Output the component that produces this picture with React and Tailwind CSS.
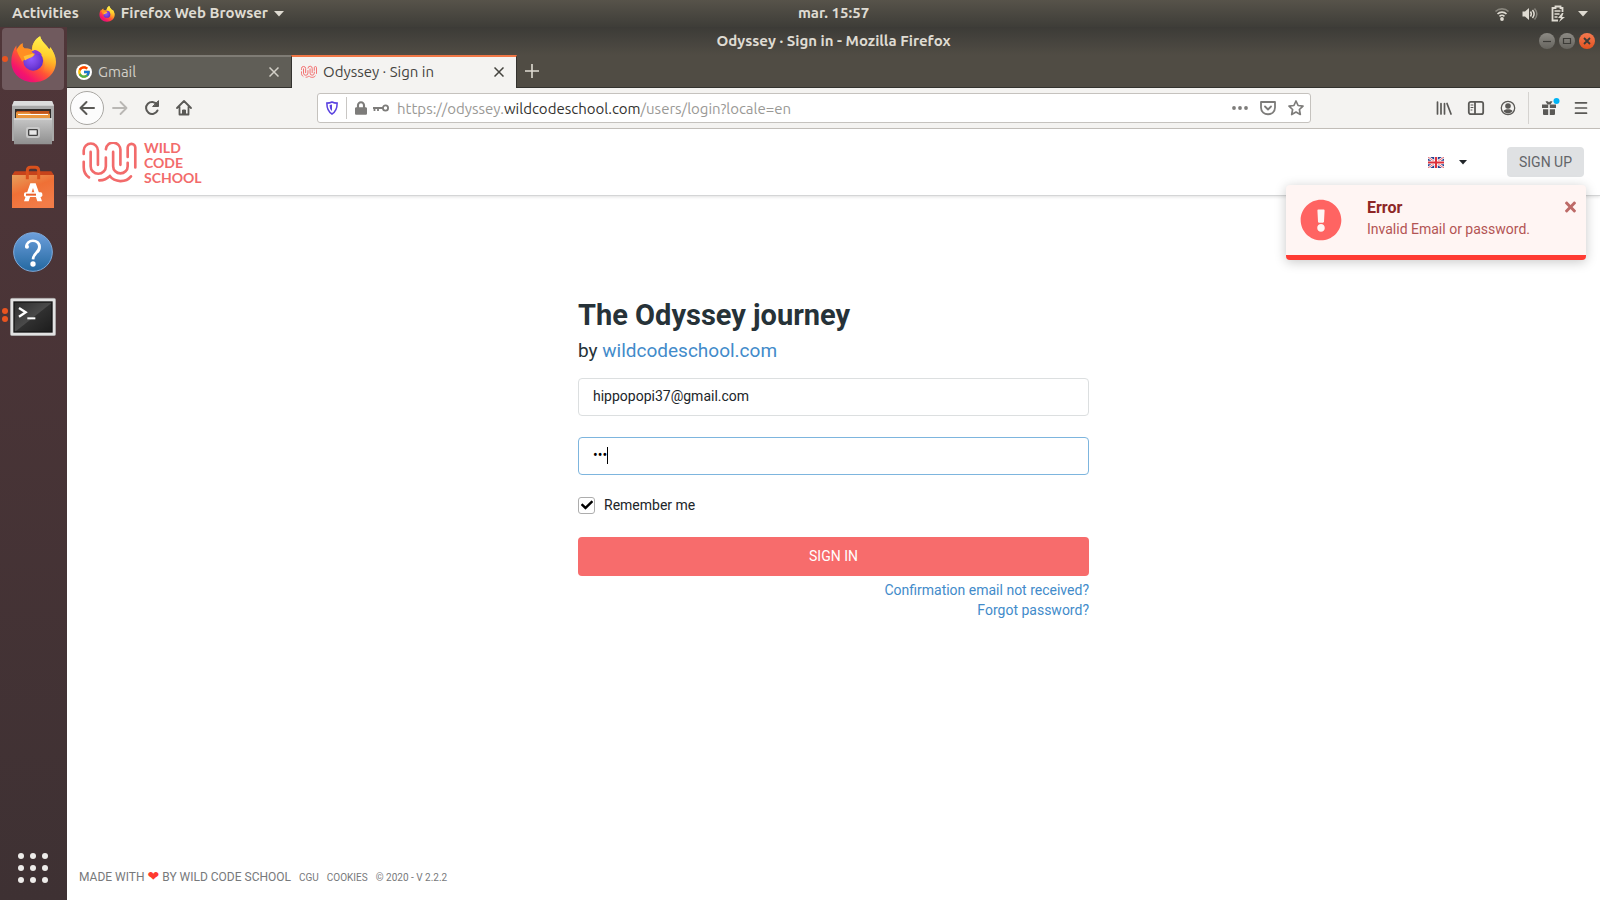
import React from "react";
import { FcGoogle } from "react-icons/fc";
import { FaCheck, FaTimes, FaExclamationCircle, FaLock } from "react-icons/fa";

const uiFont = "font-['Ubuntu','Noto_Sans',sans-serif]";

function FirefoxLogo({ id, className }) {
  return (
    <svg viewBox="0 0 136 142" className={className} aria-hidden="true">
      <defs>
        <linearGradient id={id + "a"} x1="0.85" y1="0.1" x2="0.2" y2="0.95">
          <stop offset="0" stopColor="#fff44f" />
          <stop offset="0.3" stopColor="#ffb02a" />
          <stop offset="0.6" stopColor="#ff5236" />
          <stop offset="0.85" stopColor="#f5156c" />
          <stop offset="1" stopColor="#e0107e" />
        </linearGradient>
        <linearGradient id={id + "b"} x1="0.6" y1="0" x2="0.5" y2="1">
          <stop offset="0" stopColor="#fff44f" />
          <stop offset="0.5" stopColor="#ffd02f" />
          <stop offset="1" stopColor="#ff8a16" stopOpacity="0" />
        </linearGradient>
        <radialGradient id={id + "c"} cx="0.4" cy="0.4" r="0.65">
          <stop offset="0" stopColor="#9059ff" />
          <stop offset="0.6" stopColor="#7440dc" />
          <stop offset="1" stopColor="#592acb" />
        </radialGradient>
      </defs>
      <path
        d="M88 1c4 16 20 27 28 40l3-7c10 14 17 28 17 44 0 36-30 62-68 62S1 113 1 78c0-19 6-37 15-49l1 13c4-8 10-15 18-20-1 8 1 12 6 16 8-1 15 0 22 4 0-18 10-32 25-41z"
        fill={"url(#" + id + "a)"}
      />
      <path d="M88 1c4 16 20 27 28 40l3-7c14 20 17 42 12 58-8 20-26 24-37 18 12-14 10-42-6-56-8-7-18-9-24-11C64 23 74 9 88 1z" fill={"url(#" + id + "b)"} />
      <circle cx="67" cy="75" r="30" fill={"url(#" + id + "c)"} />
      <path d="M17 42c4-8 10-15 18-20-1 8 1 12 6 16 10-1 20 4 25 13 8 1 8 4 0 10-8 5-13 6-20 9-5 3-9 2-12 8-6-14-12-20-17-36z" fill="#ff8f22" />
      <path d="M38 62c6-4 16-4 28-9 6 3 3 7-4 11-9 4-14 5-19 10z" fill="#ffc03a" />
      <path d="M66 42c14 0 24 6 28 17-6-5-13-5-20-4 1-6-2-10-8-13z" fill="#8a35d8" />
    </svg>
  );
}

function WildMark({ className, strokeWidth = 8 }) {
  return (
    <svg viewBox="14 17 166 124" className={className} fill="none" stroke="#f26b6b" strokeWidth={strokeWidth} strokeLinecap="round" aria-hidden="true">
      <path d="M19 53V43A21.500 21.500 0 0 1 62 43V86" />
      <path d="M40 47V90A23 23 0 0 0 86 90V64" />
      <path d="M19 77V93C19 107 25 117 35 124" />
      <path d="M86 39A22 22 0 0 1 130 43V86" />
      <path d="M108 47V90A22 22 0 0 0 152 90V80" />
      <path d="M152 62V34A11.500 11.500 0 0 1 175 34V94" />
      <path d="M66 133C82 133 88 128 98 120C112 139 146 141 162 121" />
    </svg>
  );
}

function Triangle() {
  return (
    <svg viewBox="0 0 10 6" className="h-1.5 w-2.5" aria-hidden="true">
      <path d="M0 0h10L5 5.500z" fill="#dfdbd2" />
    </svg>
  );
}

function TopBar() {
  return (
    <header className={"flex h-[27px] items-center bg-linear-to-b from-[#57534a] to-[#3e3d38] px-3 text-[15px] font-semibold text-[#dfdbd2] " + uiFont}>
      <div className="flex flex-1 items-center gap-5">
        <button type="button">Activities</button>
        <button type="button" className="flex items-center gap-1.5">
          <FirefoxLogo id="fs" className="h-4 w-4" />
          <span>Firefox Web Browser</span>
          <Triangle />
        </button>
      </div>
      <time className="ml-[67px]">mar. 15:57</time>
      <div className="flex flex-1 items-center justify-end gap-3">
        <svg viewBox="0 0 16 16" className="h-4 w-4" fill="none" stroke="#dfdbd2" strokeWidth="1.6" aria-hidden="true">
          <path d="M1.500 5.500C5 2 11 2 14.500 5.500" opacity="0.4" />
          <path d="M3.500 8C6 5.500 10 5.500 12.500 8M5.500 10.300C7 9 9 9 10.500 10.300" />
          <circle cx="8" cy="13" r="1.900" fill="#dfdbd2" stroke="none" />
        </svg>
        <svg viewBox="0 0 16 16" className="h-4 w-4" fill="none" stroke="#dfdbd2" strokeWidth="1.5" aria-hidden="true">
          <path d="M0.500 5.500H3L7 2v12L3 10.500H0.500z" fill="#dfdbd2" stroke="none" />
          <path d="M8.500 5.500c1 1.500 1 3.500 0 5M10.500 4c2 2.500 2 5.500 0 8" />
          <path d="M12.500 2.500c3 3.500 3 7.500 0 11" opacity="0.4" />
        </svg>
        <svg viewBox="0 0 16 18" className="h-[18px] w-4" aria-hidden="true">
          <path d="M12.500 7V3h-2V1.500h-5V3h-3v12.500H8" fill="none" stroke="#dfdbd2" strokeWidth="1.800" />
          <path d="M4.500 6h6M4.500 9h5M4.500 12h3" stroke="#dfdbd2" strokeWidth="1.500" />
          <path d="M12 8l-4 5h3l-2 4 6-5h-3l1.500-4z" fill="#dfdbd2" />
        </svg>
        <Triangle />
      </div>
    </header>
  );
}

function DockItem({ label, dots = 0, active, children }) {
  return (
    <button
      type="button"
      aria-label={label}
      className={"relative flex h-[62px] w-[62px] items-center justify-center rounded " + (active ? "bg-[#705a5e]" : "")}
    >
      {children}
      {dots > 0 && (
        <span className="absolute inset-y-0 left-0 flex flex-col items-center justify-center gap-0.5">
          {Array.from({ length: dots }, (_, i) => (
            <span key={i} className="h-1.5 w-1.5 rounded-full bg-[#e95420]" />
          ))}
        </span>
      )}
    </button>
  );
}

function Dock() {
  return (
    <nav aria-label="Dock" className="flex w-[67px] shrink-0 flex-col items-start gap-0.5 bg-linear-to-b from-[#503639] to-[#3e3133] pl-0.5 pt-px pb-1">
      <DockItem label="Firefox" dots={1} active>
        <FirefoxLogo id="fb" className="h-[47px] w-[45px]" />
      </DockItem>
      <DockItem label="Files">
        <svg viewBox="0 0 126 132" className="h-11 w-[42px]" aria-hidden="true">
          <defs>
            <linearGradient id="cab" x1="0" y1="0" x2="0" y2="1">
              <stop offset="0" stopColor="#c6c6c6" />
              <stop offset="1" stopColor="#8f8f8f" />
            </linearGradient>
          </defs>
          <path d="M6 0h114l6 14v106H0V14z" fill="#a9a9a9" />
          <path d="M6 0h114l6 14H0z" fill="#dcdcdc" />
          <path d="M9 24h108v30H9z" fill="#2e2b29" />
          <path d="M14 30h98v22H14z" fill="#c2551c" />
          <path d="M12 34h40l6 4h56v14H12z" fill="#e9963e" />
          <path d="M18 39h90v3H18z" fill="#fff" />
          <path d="M6 52h114v78H6z" fill="url(#cab)" />
          <path d="M6 52h114v4H6z" fill="#dedede" />
          <rect x="42" y="78" width="42" height="33" rx="7" fill="#c9c9c9" />
          <rect x="50" y="86" width="26" height="17" rx="2" fill="#e8e8e8" stroke="#444" strokeWidth="4" />
        </svg>
      </DockItem>
      <DockItem label="Ubuntu Software">
        <svg viewBox="0 0 126 130" className="h-11 w-[42px]" aria-hidden="true">
          <defs>
            <linearGradient id="bag" x1="0" y1="0" x2="0.5" y2="1">
              <stop offset="0" stopColor="#e6a05c" />
              <stop offset="0.5" stopColor="#ef7036" />
              <stop offset="1" stopColor="#f27c48" />
            </linearGradient>
          </defs>
          <path d="M8 18h110l8 12H0z" fill="#c6431b" />
          <path d="M0 29h126v99H0z" fill="url(#bag)" />
          <path d="M46 42V16q0-10 10-10h14q10 0 10 10v26" fill="none" stroke="#d9511d" strokeWidth="9" />
          <path d="M55 54h16l19 54H76L63 68l-13 40H36z" fill="#fff" />
          <rect x="36" y="81" width="55" height="14" rx="5" fill="#fff" />
          <path d="M42 85h30v6H42z" fill="#e9602a" />
        </svg>
      </DockItem>
      <DockItem label="Help">
        <svg viewBox="0 -6 120 126" className="h-[42px] w-10" aria-hidden="true">
          <defs>
            <linearGradient id="help" x1="0" y1="0" x2="0" y2="1">
              <stop offset="0" stopColor="#6d9fdc" />
              <stop offset="1" stopColor="#2368a0" />
            </linearGradient>
          </defs>
          <circle cx="60" cy="60" r="58" fill="url(#help)" stroke="#7fabdc" strokeWidth="3" />
          <path d="M40 46C39 20 80 20 79 45c-1 18-18 18-19 37" fill="none" stroke="#fff" strokeWidth="8" />
          <path d="M70 28c12 6 14 24 4 33" fill="none" stroke="#fff" strokeWidth="6" />
          <circle cx="42" cy="44" r="6" fill="#fff" />
          <circle cx="60" cy="96" r="8" fill="#fff" />
        </svg>
      </DockItem>
      <DockItem label="Terminal" dots={2}>
        <svg viewBox="0 -12 138 126" className="h-[42px] w-[46px]" aria-hidden="true">
          <defs>
            <linearGradient id="term" x1="0" y1="0" x2="1" y2="1">
              <stop offset="0" stopColor="#2d2d2d" />
              <stop offset="0.5" stopColor="#4a4a4a" />
              <stop offset="0.520" stopColor="#303030" />
              <stop offset="1" stopColor="#1c1c1c" />
            </linearGradient>
          </defs>
          <rect x="1" y="1" width="136" height="112" rx="5" fill="#e2e2e2" stroke="#a5a5a5" strokeWidth="2" />
          <rect x="12" y="12" width="114" height="90" fill="url(#term)" stroke="#141414" strokeWidth="4" />
          <path d="M27 30l20 13-20 13" fill="none" stroke="#fff" strokeWidth="7" />
          <path d="M52 61h24" stroke="#fff" strokeWidth="6" />
        </svg>
      </DockItem>
      <button type="button" aria-label="Show Applications" className="mt-auto flex h-14 w-[62px] items-center justify-center">
        <svg viewBox="0 0 30 30" className="h-[30px] w-[30px]" fill="#eeecea" aria-hidden="true">
          {[3, 15, 27].map((y) => [3, 15, 27].map((x) => <circle key={x + "-" + y} cx={x} cy={y} r="3" />))}
        </svg>
      </button>
    </nav>
  );
}

function Cross({ className }) {
  return (
    <svg viewBox="0 0 10 10" className={className} fill="none" stroke="currentColor" strokeWidth="1.500" aria-hidden="true">
      <path d="M0.500 0.500l9 9M9.500 0.500l-9 9" />
    </svg>
  );
}

function WindowButton({ label, tone, children }) {
  return (
    <button type="button" aria-label={label} className={"flex h-4 w-4 items-center justify-center rounded-full bg-linear-to-b text-[#3c3b37] " + tone}>
      <svg viewBox="0 0 16 16" className="h-4 w-4" fill="none" stroke="currentColor" strokeWidth="1.200" aria-hidden="true">
        {children}
      </svg>
    </button>
  );
}

function TitleBar() {
  return (
    <div className={"flex h-7 items-center bg-linear-to-b from-[#3c3b37] to-[#504c44] px-[5px] text-[15px] font-semibold text-[#dfdbd2] " + uiFont}>
      <div className="flex-1" />
      <h1>Odyssey · Sign in - Mozilla Firefox</h1>
      <div className="flex flex-1 justify-end gap-1">
        <WindowButton label="Minimize" tone="from-[#8d8b85] to-[#66645e]"><path d="M4 8.500h8" /></WindowButton>
        <WindowButton label="Maximize" tone="from-[#8d8b85] to-[#66645e]"><path d="M4.500 5.500h7v5h-7z" /></WindowButton>
        <WindowButton label="Close" tone="from-[#f4794f] to-[#e2521c]"><path d="M5 5l6 6M11 5l-6 6" strokeWidth="1.800" /></WindowButton>
      </div>
    </div>
  );
}

function TabStrip() {
  return (
    <div className={"flex h-[33px] items-stretch border-b border-[#33322e] bg-[#504c44] text-[15px] leading-5 " + uiFont}>
      <div className="flex w-[224px] items-center gap-1.5 border-t-2 border-[#7f7c75] bg-[#605e57] pl-[9px] pr-2 text-[#d3d0c8]">
        <span className="flex h-4 w-4 items-center justify-center rounded-full bg-white">
          <FcGoogle className="h-3.5 w-3.5" />
        </span>
        <span className="flex-1">Gmail</span>
        <button type="button" aria-label="Close Gmail tab" className="mr-1"><Cross className="h-2.5 w-2.5" /></button>
      </div>
      <div className="-mb-px flex w-[226px] items-center gap-1.5 border-x border-t-2 border-x-[#33322e] border-t-[#f07746] bg-[#f4f3f1] pl-[9px] pr-2 pb-0.5 text-[#45443f]">
        <WildMark className="h-4 w-4" strokeWidth={10} />
        <span className="flex-1">Odyssey · Sign in</span>
        <button type="button" aria-label="Close Odyssey tab" className="mr-1"><Cross className="h-2.5 w-2.5" /></button>
      </div>
      <button type="button" aria-label="New tab" className="px-2 text-[#dfdbd2]">
        <svg viewBox="0 0 14 14" className="h-3.5 w-3.5" stroke="currentColor" strokeWidth="1.600" aria-hidden="true"><path d="M7 0v14M0 7h14" /></svg>
      </button>
    </div>
  );
}

function ToolIcon({ label, children, className = "" }) {
  return (
    <button type="button" aria-label={label} className={"flex h-8 w-8 items-center justify-center " + className}>
      <svg viewBox="0 0 16 16" className="h-4 w-4 overflow-visible" fill="none" stroke="currentColor" strokeWidth="1.800" strokeLinecap="round" strokeLinejoin="round" aria-hidden="true">
        {children}
      </svg>
    </button>
  );
}

function NavBar() {
  return (
    <div className={"flex h-[41px] items-center border-b border-[#c5c1bc] bg-[#f4f3f1] px-[3px] text-[#5a5956] " + uiFont}>
      <button type="button" aria-label="Back" className="flex h-[34px] w-[34px] items-center justify-center rounded-full border border-[#a9a7a3] bg-[#fcfcfc]">
        <svg viewBox="0 0 16 16" className="h-4 w-4" fill="none" stroke="currentColor" strokeWidth="2" strokeLinecap="round" strokeLinejoin="round" aria-hidden="true"><path d="M15 8H1.500M7.500 2l-6 6 6 6" /></svg>
      </button>
      <ToolIcon label="Forward" className="text-[#b9b7b4]"><path d="M1 8h13.500M8.500 2l6 6-6 6" /></ToolIcon>
      <ToolIcon label="Reload"><path d="M13.500 10.500A6 6 0 1 1 13 4.500" strokeWidth="2" /><path d="M14.500 1v5.500H9z" fill="currentColor" strokeWidth="1" /></ToolIcon>
      <ToolIcon label="Home"><path d="M1 8l7-7 7 7M3.500 7v7.500h9V7" /><path d="M6.500 14v-4h3v4z" fill="currentColor" strokeWidth="1" /></ToolIcon>
      <form className="ml-[117px] flex h-[30px] flex-1 items-center rounded-[3px] border border-[#c5c2be] bg-white pl-2 pr-1.5" onSubmit={(e) => e.preventDefault()}>
        <svg viewBox="0 0 14 16" className="h-3.5 w-3" fill="none" stroke="#5b43e0" strokeWidth="1.800" aria-hidden="true">
          <path d="M7 1c2 1 4 1.300 6 1.300 0 6-1 10-6 12.700C2 12.300 1 8.300 1 2.300 3 2.300 5 2 7 1z" />
          <path d="M7 4v7.500C5 10 4.200 8 4.200 4.500z" fill="#5b43e0" stroke="none" />
        </svg>
        <span className="ml-2 h-[22px] w-px bg-[#c9c7c4]" />
        <FaLock className="ml-2 h-3.5 w-3 text-[#7d7c7a]" aria-hidden="true" />
        <svg viewBox="0 0 16 8" className="ml-1.5 h-2 w-4" fill="none" stroke="#7d7c7a" strokeWidth="1.800" aria-hidden="true">
          <circle cx="12.500" cy="4" r="2.600" /><path d="M10 4H0M1.500 4v3M5 4v3" />
        </svg>
        <div role="textbox" aria-label="Address" className="ml-2 flex-1 pt-0.5 text-[15px] text-[#9a9996]">
          https://odyssey.<span className="text-[#33322f]">wildcodeschool.com</span>/users/login?locale=en
        </div>
        <div className="flex items-center gap-3 text-[#7d7c7a]">
          <button type="button" aria-label="Page actions">
            <svg viewBox="0 0 16 4" className="h-1 w-4" fill="currentColor" aria-hidden="true"><circle cx="2" cy="2" r="1.900" /><circle cx="8" cy="2" r="1.900" /><circle cx="14" cy="2" r="1.900" /></svg>
          </button>
          <button type="button" aria-label="Save to Pocket">
            <svg viewBox="0 0 16 16" className="h-4 w-4" fill="none" stroke="currentColor" strokeWidth="1.800" strokeLinecap="round" strokeLinejoin="round" aria-hidden="true"><path d="M1 2h14v5.500c0 9-14 9-14 0zM5 6.500l3 3 3-3" /></svg>
          </button>
          <button type="button" aria-label="Bookmark">
            <svg viewBox="0 0 16 16" className="h-4 w-4" fill="none" stroke="currentColor" strokeWidth="1.700" strokeLinejoin="round" aria-hidden="true"><path d="M8 1l2.100 4.500 4.900.6-3.600 3.400.9 5L8 12.100l-4.300 2.400.9-5L1 6.100l4.900-.6z" /></svg>
          </button>
        </div>
      </form>
      <div className="ml-[117px] flex items-center">
        <ToolIcon label="Library"><path d="M1.500 2v12M5 3.500v10.500M8.500 3.500v10.500M11 3.500l4 10.500" strokeWidth="1.700" /></ToolIcon>
        <ToolIcon label="Sidebars"><rect x="0.800" y="1.800" width="14.400" height="12.400" rx="2" /><path d="M7 2v12" /><path d="M3 5h2M3 7.500h2M3 10h1" strokeWidth="1" /></ToolIcon>
        <ToolIcon label="Account">
          <circle cx="8" cy="8" r="6.700" strokeWidth="1.300" />
          <circle cx="8" cy="6" r="2.800" fill="currentColor" stroke="none" />
          <path d="M3.500 11c1-2.500 8-2.500 9 0-2 3.200-7 3.200-9 0z" fill="currentColor" stroke="none" />
        </ToolIcon>
        <span className="mx-1 h-8 w-px bg-[#d5d3d0]" />
        <ToolIcon label="What's new">
          <g fill="currentColor" stroke="none">
            <path d="M1 4.500h6.200V8H1zM8.800 4.500H15V8H8.800zM2 9.300h5.200V15H3q-1 0-1-1zM8.800 9.300H14V14q0 1-1 1H8.800z" />
            <path d="M4.500 1.500C6 .8 7.500 1.500 8 2.500c.5-1 2-1.700 3.500-1L9.500 4.500h-3z" />
          </g>
          <circle cx="15.500" cy="1" r="3" fill="#00b3f4" stroke="none" />
        </ToolIcon>
        <ToolIcon label="Menu"><path d="M2.500 2.800h11M2.500 8h11M2.500 13.200h11" strokeWidth="1.700" /></ToolIcon>
      </div>
    </div>
  );
}

function Toast() {
  return (
    <div role="alert" className="absolute right-3.5 top-[56px] flex h-[75px] w-[300px] items-start rounded border-b-[5px] border-[#ff3b33] bg-[#fff5f3] pl-3.5 pr-2.5 shadow-[0_2px_12px_rgba(0,0,0,0.22)]">
      <FaExclamationCircle className="mt-3.5 h-[42px] w-[42px] text-[#ff6462]" aria-hidden="true" />
      <div className="ml-[25px] mt-3 flex-1">
        <strong className="block text-base leading-[22px] font-bold text-[#8e2726]">Error</strong>
        <p className="text-sm leading-[20px] text-[#b35453]">Invalid Email or password.</p>
      </div>
      <button type="button" aria-label="Dismiss" className="mt-3.5 text-[#bd6a67]"><FaTimes className="h-4 w-[11px]" /></button>
    </div>
  );
}

function PageHeader() {
  return (
    <header className="flex h-[67px] items-center justify-between border-b border-[#d4d5d6] pl-[15px] pr-4 shadow-[0_1px_3px_rgba(0,0,0,0.12)]">
      <a href="#home" aria-label="Wild Code School" className="flex items-center gap-[7px]">
        <WildMark className="h-[41px] w-[55px]" />
        <span className="font-['Lato',sans-serif] text-sm leading-[15px] font-bold text-[#f26b6b]">
          WILD<br />CODE<br />SCHOOL
        </span>
      </a>
      <div className="flex items-center gap-10">
        <button type="button" aria-label="Language" className="flex items-center gap-[15px]">
          <svg viewBox="0 0 16 11" className="h-[11px] w-4" aria-hidden="true">
            <path d="M0 0h16v11H0z" fill="#26408f" />
            <path d="M0 0l16 11M16 0L0 11" stroke="#fff" strokeWidth="2.400" />
            <path d="M0 0l16 11M16 0L0 11" stroke="#e0404a" strokeWidth="0.800" />
            <path d="M8 0v11M0 5.500h16" stroke="#fff" strokeWidth="3.600" />
            <path d="M8 0v11M0 5.500h16" stroke="#dc2f3b" strokeWidth="2" />
          </svg>
          <svg viewBox="0 0 8 5" className="h-[5px] w-2" aria-hidden="true"><path d="M0 0h8L4 4.500z" fill="#212529" /></svg>
        </button>
        <a href="#signup" className="flex h-[30px] items-center rounded bg-[#dfe1e3] px-3 text-sm text-[#636569]">SIGN UP</a>
      </div>
    </header>
  );
}

function SignIn() {
  return (
    <form className="mx-auto mt-[100px] w-1/3 text-sm text-[#212529]" onSubmit={(e) => e.preventDefault()}>
      <h2 className="text-[29px] leading-[38px] font-bold text-[#263238]">The Odyssey journey</h2>
      <p className="text-[19px] leading-[34px] text-[#263238]">
        by <a href="#wcs" className="text-[#428bca]">wildcodeschool.com</a>
      </p>
      <input
        type="email"
        aria-label="Email"
        defaultValue="hippopopi37@gmail.com"
        className="mt-2.5 block h-[38px] w-full rounded border border-[#dcdfe0] bg-white px-3.5 pb-0.5 outline-none"
      />
      <div className="relative mt-[21px]">
        <input
          type="password"
          aria-label="Password"
          defaultValue="abc"
          className="block h-[38px] w-full rounded border border-[#7db5de] bg-white px-3.5 pb-0.5 text-black outline-none"
        />
        <span className="absolute left-[29px] top-2.5 h-[17px] w-px bg-black" />
      </div>
      <label className="mt-5 flex items-center gap-[9px]">
        <span className="relative flex h-[17px] w-[17px]">
          <input type="checkbox" defaultChecked className="peer h-full w-full appearance-none rounded-[3px] border border-[#adadad] bg-white" />
          <FaCheck className="pointer-events-none absolute inset-0 m-auto hidden h-3 w-3 text-black peer-checked:block" aria-hidden="true" />
        </span>
        Remember me
      </label>
      <button type="submit" className="mt-[22px] h-[39px] w-full rounded bg-[#f76c6c] pb-0.5 text-white">SIGN IN</button>
      <div className="mt-1 flex flex-col items-end leading-5 text-[#428bca]">
        <a href="#confirmation">Confirmation email not received?</a>
        <a href="#password">Forgot password?</a>
      </div>
    </form>
  );
}

function PageFooter() {
  return (
    <footer className="mt-auto flex items-baseline gap-2 px-3 pb-[15px] text-[10px] text-[#77797b]">
      <span className="text-xs">
        MADE WITH <span className="font-['DejaVu_Sans'] text-sm leading-none text-[#ff3a30]">❤</span> BY WILD CODE SCHOOL
      </span>
      <a href="#cgu">CGU</a>
      <a href="#cookies">COOKIES</a>
      <span>© 2020 - V 2.2.2</span>
    </footer>
  );
}

export default function App() {
  return (
    <div className="flex min-h-screen flex-col bg-white">
      <TopBar />
      <div className="flex flex-1">
        <Dock />
        <div className="flex min-w-0 flex-1 flex-col">
          <TitleBar />
          <TabStrip />
          <NavBar />
          <main className="relative flex flex-1 flex-col bg-white font-['Roboto',sans-serif]">
            <PageHeader />
            <Toast />
            <SignIn />
            <PageFooter />
          </main>
        </div>
      </div>
    </div>
  );
}
